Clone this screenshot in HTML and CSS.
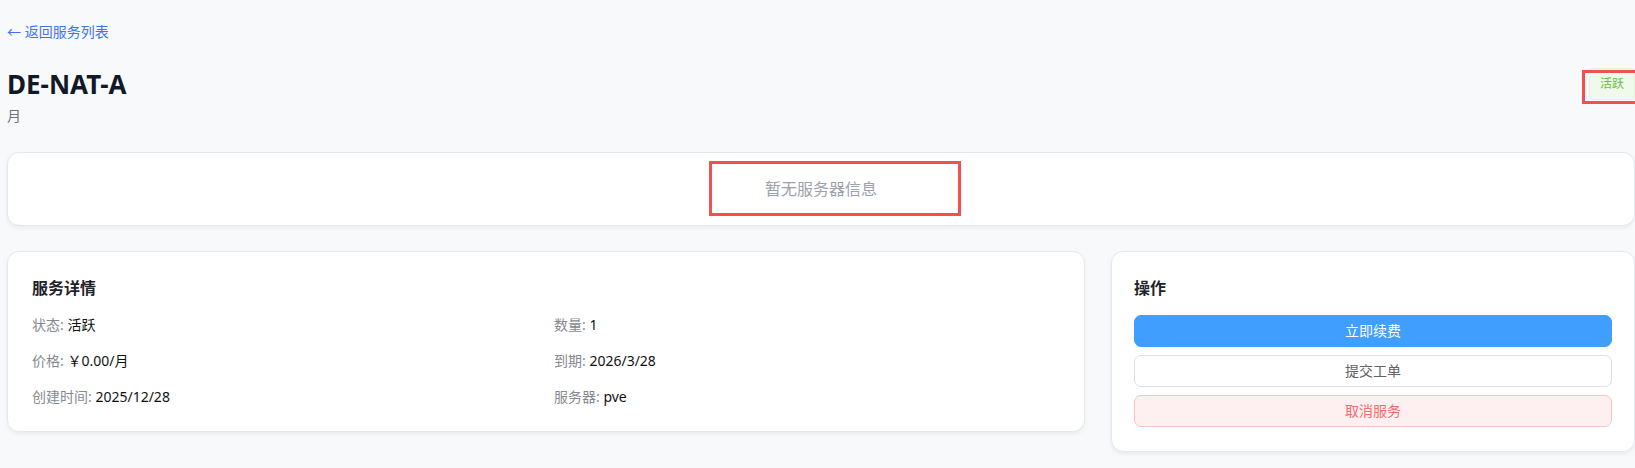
FILE: index.html
```html
<!DOCTYPE html>
<html lang="zh-CN">
<head>
<meta charset="utf-8">
<title>DE-NAT-A</title>
<link rel="stylesheet" href="styles.css">
</head>
<body>
<div class="page">
  <a class="back-link" href="#">← 返回服务列表</a>

  <div class="header">
    <div class="header-main">
      <h1 class="title">DE-NAT-A</h1>
      <div class="subtitle">月</div>
    </div>
    <span class="tag tag-success">活跃</span>
  </div>

  <div class="card server-card">
    <div class="empty-text">暂无服务器信息</div>
  </div>

  <div class="grid">
    <div class="card detail-card">
      <h2 class="card-title">服务详情</h2>
      <div class="detail-grid">
        <div class="detail-item"><span class="label">状态:</span> <span class="value">活跃</span></div>
        <div class="detail-item"><span class="label">数量:</span> <span class="value">1</span></div>
        <div class="detail-item"><span class="label">价格:</span> <span class="value">￥0.00/月</span></div>
        <div class="detail-item"><span class="label">到期:</span> <span class="value">2026/3/28</span></div>
        <div class="detail-item"><span class="label">创建时间:</span> <span class="value">2025/12/28</span></div>
        <div class="detail-item"><span class="label">服务器:</span> <span class="value">pve</span></div>
      </div>
    </div>

    <div class="card action-card">
      <h2 class="card-title">操作</h2>
      <div class="actions">
        <button class="btn btn-primary">立即续费</button>
        <button class="btn btn-default">提交工单</button>
        <button class="btn btn-danger">取消服务</button>
      </div>
    </div>
  </div>

  <div class="mark mark-tag"></div>
  <div class="mark mark-empty"></div>
</div>
</body>
</html>
```

FILE: styles.css
```css
* {
  box-sizing: border-box;
}

html, body {
  margin: 0;
  padding: 0;
}

body {
  background: #f8f9fb;
  font-family: "Noto Sans", "Noto Sans CJK SC", sans-serif;
  color: #111827;
  overflow: hidden;
}

.page {
  position: relative;
  margin-left: 7px;
  width: 1628px;
  padding-top: 22px;
  padding-bottom: 20px;
}

.back-link {
  display: block;
  font-size: 14px;
  line-height: 20px;
  color: #3b74f2;
  text-decoration: none;
}

.header {
  display: flex;
  justify-content: space-between;
  align-items: flex-start;
  margin-top: 26px;
}

.title {
  margin: 0;
  font-size: 26px;
  line-height: 32px;
  font-weight: 700;
  color: #111827;
}

.subtitle {
  margin-top: 6px;
  font-size: 14px;
  line-height: 20px;
  color: #6b7280;
}

.tag {
  display: inline-block;
  height: 32px;
  line-height: 30px;
  padding: 0 10px;
  font-size: 12px;
  border-radius: 4px;
  border: 1px solid;
}

.tag-success {
  background: #f0f9eb;
  border-color: #e1f3d8;
  color: #67c23a;
}

.card {
  background: #fff;
  border: 1px solid #e4e7ed;
  border-radius: 12px;
  box-shadow: 0 2px 4px rgba(0, 0, 0, 0.06);
}

.server-card {
  margin-top: 26px;
  padding: 24px;
}

.empty-text {
  text-align: center;
  font-size: 16px;
  line-height: 24px;
  color: #9ca0a8;
}

.grid {
  display: grid;
  grid-template-columns: 1fr 524px;
  gap: 26px;
  align-items: start;
  margin-top: 25px;
}

.detail-card {
  padding: 24px;
}

.action-card {
  padding: 24px 22px;
}

.card-title {
  margin: 0 0 15px;
  font-size: 16px;
  line-height: 24px;
  font-weight: 700;
  color: #1f2329;
}

.detail-grid {
  display: grid;
  grid-template-columns: 1fr 1fr;
  column-gap: 16px;
  row-gap: 16px;
}

.detail-item {
  font-size: 14px;
  line-height: 20px;
}

.label {
  color: #86898f;
}

.value {
  color: #111;
}

.actions {
  display: flex;
  flex-direction: column;
  gap: 8px;
}

.btn {
  display: block;
  width: 100%;
  height: 32px;
  border-radius: 7px;
  border: 1px solid;
  font-family: inherit;
  font-size: 14px;
  line-height: 30px;
  padding: 0;
  cursor: pointer;
}

.btn-primary {
  background: #409eff;
  border-color: #409eff;
  color: #fff;
}

.btn-default {
  background: #fff;
  border-color: #dcdfe6;
  color: #606266;
}

.btn-danger {
  background: #fef0f0;
  border-color: #fbc4c4;
  color: #f56c6c;
}

.mark {
  position: absolute;
  border: 3px solid #f24f4f;
  pointer-events: none;
}

.mark-tag {
  left: 1575px;
  top: 70px;
  width: 70px;
  height: 34px;
}

.mark-empty {
  left: 702px;
  top: 161px;
  width: 252px;
  height: 55px;
}
```
